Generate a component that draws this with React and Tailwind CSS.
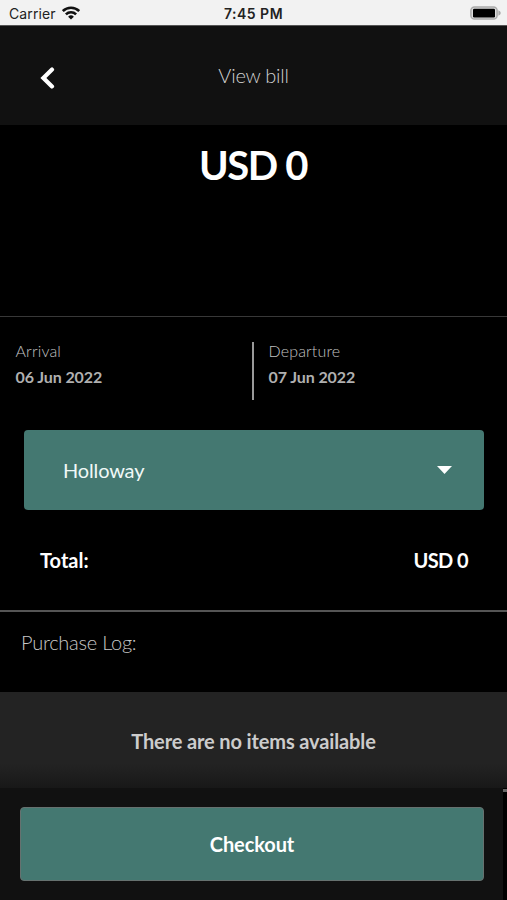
import React from 'react';
import { clsx } from 'clsx';

const bill = {
  total: 'USD 0',
  room: 'Holloway',
  stay: [
    { label: 'Arrival', date: '06 Jun 2022' },
    { label: 'Departure', date: '07 Jun 2022' },
  ],
};

const StatusBar = () => (
  <div className="grid h-[26px] shrink-0 grid-cols-3 items-center border-b border-[#555] bg-[#f2f2f2] pl-[9px] pr-[6px] font-['Inter',sans-serif] text-[#222]">
    <div className="flex items-center gap-[6px]">
      <span className="mt-[3px] text-[14px] leading-none tracking-[0.1px]">Carrier</span>
      <svg className="h-[14px] w-[18px]" viewBox="0 0 18 14" fill="none" stroke="#111" strokeWidth="2.6">
        <path d="M0.8 5.1a11.8 11.8 0 0 1 16.4 0" />
        <path d="M3.9 8.4a7.3 7.3 0 0 1 10.2 0" />
        <path d="M9 13.6L6.1 10.7a4.2 4.2 0 0 1 5.8 0Z" fill="#111" stroke="none" />
      </svg>
    </div>
    <span className="mt-[3px] -ml-[3px] text-center text-[14px] font-semibold leading-none tracking-[0.5px]">7:45 PM</span>
    <svg className="h-[14px] w-[31px] justify-self-end" viewBox="0 0 31 14">
      <rect x="0.9" y="0.9" width="26.2" height="12.2" rx="3.6" fill="#ddd" stroke="#aaa" strokeWidth="1.5" />
      <rect x="3" y="2.8" width="22" height="8.6" rx="1.2" fill="#000" />
      <path d="M28.4 4.3q2.4 1 2.4 2.7t-2.4 2.7Z" fill="#aaa" />
    </svg>
  </div>
);

const Header = () => (
  <header className="grid h-[99px] shrink-0 grid-cols-3 items-center bg-[#111]">
    <button className="ml-[40px] mt-[5px] w-4" aria-label="Back">
      <svg className="h-[22px] w-4" viewBox="0 0 16 22" fill="none" stroke="#fff" strokeWidth="4.2">
        <path d="M12 2.6L3.4 11l8.6 8.4" strokeLinecap="round" />
      </svg>
    </button>
    <h1 className="-mt-[1px] text-center text-[20px] font-light leading-6 tracking-[-0.25px] text-[#d0d0d0]">
      View bill
    </h1>
  </header>
);

const App = () => {
  return (
    <div className="flex h-[900px] w-[507px] flex-col overflow-hidden bg-black font-['Lato',sans-serif] text-white">
      <StatusBar />
      <Header />

      <div className="h-[191px] shrink-0 pr-[1px] pt-[16px] text-center text-[40px] font-bold leading-[48px] tracking-[-1.4px]">
        {bill.total}
      </div>

      {/* Stay dates */}
      <div className="flex h-[114px] shrink-0 border-t border-[#383838] pt-[25px] text-[16px]">
        {bill.stay.map((item, i) => (
          <div
            key={item.label}
            className={clsx(
              'h-[58px]',
              i === 0 ? 'w-[252px] pl-[15.5px]' : 'flex-1 border-l-2 border-[#999] pl-[14.5px]'
            )}
          >
            <p className="-mt-px font-light leading-[19px] tracking-[0.15px] text-[#c0c0c0]">{item.label}</p>
            <p className="mt-[7px] font-bold leading-[19px] tracking-[-0.1px] text-[#b0b0b0]">{item.date}</p>
          </div>
        ))}
      </div>

      <button className="mx-[24px] flex h-[80px] w-[460px] shrink-0 items-center justify-between rounded-[4px] bg-[#447871] pl-[39px] pr-[32px] text-[20px] tracking-[-0.15px] text-[#f0f8f7]">
        {bill.room}
        <svg className="h-[8px] w-[15px]" viewBox="0 0 15 8" fill="#fff">
          <path d="M0 0h15L7.5 8Z" />
        </svg>
      </button>

      <div className="flex h-[100px] shrink-0 items-center justify-between pl-[40px] pr-[39px] text-[20px] font-bold">
        <span>Total:</span>
        <span className="tracking-[-0.6px]">{bill.total}</span>
      </div>

      {/* Purchase log */}
      <div className="h-[82px] shrink-0 border-t-2 border-[#555] pl-[21px] pt-[18px] text-[20px] font-light leading-6 tracking-[-0.25px] text-[#c8c8c8]">
        Purchase Log:
      </div>
      <div className="flex h-[96px] shrink-0 items-center justify-center bg-[linear-gradient(to_bottom,#232323_75%,#181818)] pt-[1px] text-[20px] font-bold tracking-[-0.13px] text-[#ccc]">
        There are no items available
      </div>

      <div className="flex flex-1">
        <div className="w-[503px] bg-[#111] pl-[20px] pt-[19px]">
          <button className="h-[74px] w-[464px] rounded-[4px] border border-[#66716f] bg-[#447871] text-[20px] font-bold tracking-[-0.1px]">
            Checkout
          </button>
        </div>
        <div className="mt-[1px] h-[3px] flex-1 bg-[#666]" />
      </div>
    </div>
  );
};

export default App;
